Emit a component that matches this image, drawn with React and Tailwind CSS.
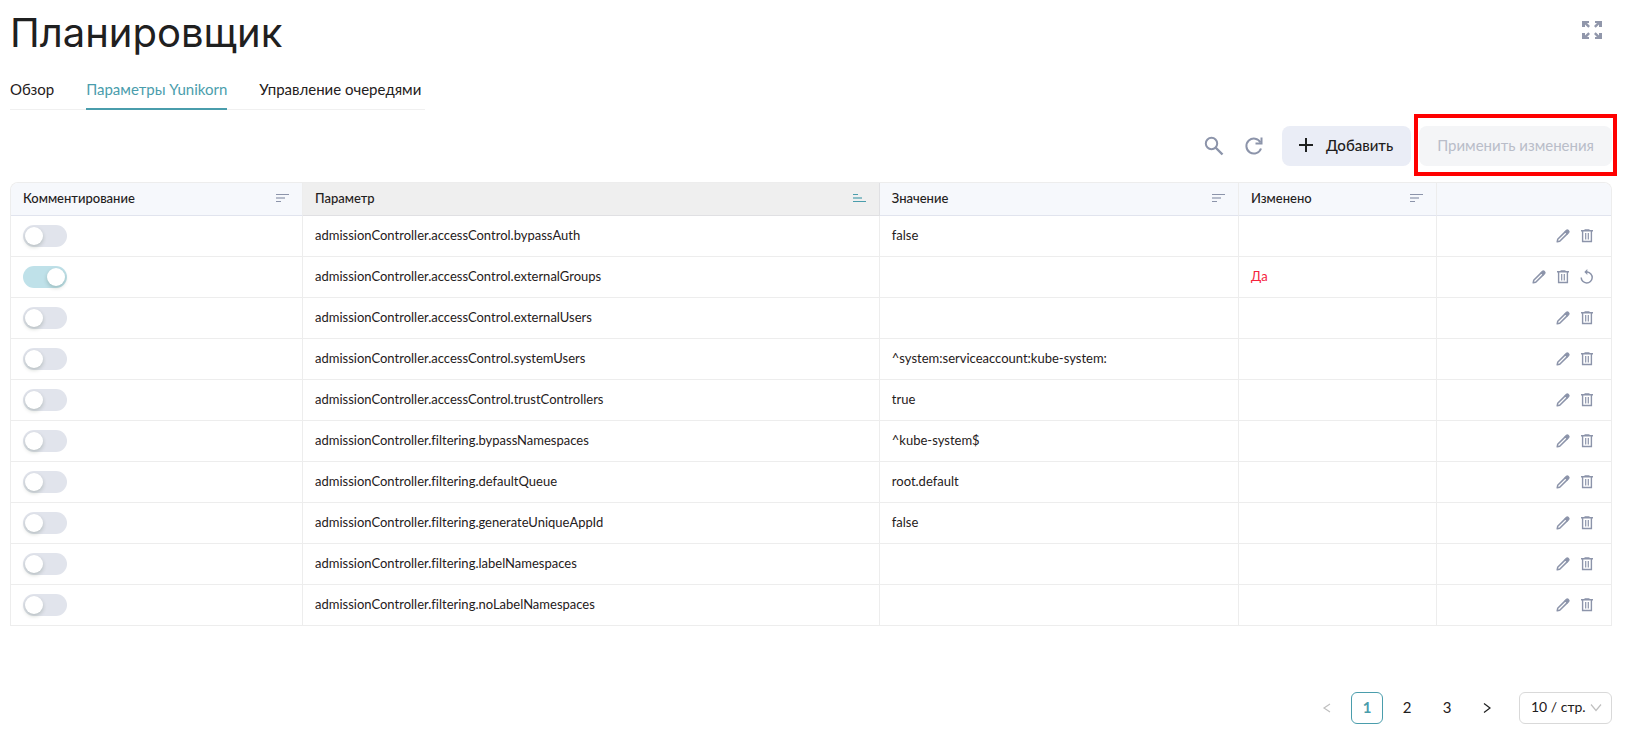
import { useState } from 'react';
import { MdAdd } from 'react-icons/md';

const initialRows = [
  { name: 'admissionController.accessControl.bypassAuth', value: 'false' },
  { name: 'admissionController.accessControl.externalGroups', value: '', commented: true, changed: true },
  { name: 'admissionController.accessControl.externalUsers', value: '' },
  { name: 'admissionController.accessControl.systemUsers', value: '^system:serviceaccount:kube-system:' },
  { name: 'admissionController.accessControl.trustControllers', value: 'true' },
  { name: 'admissionController.filtering.bypassNamespaces', value: '^kube-system$' },
  { name: 'admissionController.filtering.defaultQueue', value: 'root.default' },
  { name: 'admissionController.filtering.generateUniqueAppId', value: 'false' },
  { name: 'admissionController.filtering.labelNamespaces', value: '' },
  { name: 'admissionController.filtering.noLabelNamespaces', value: '' },
];

const tabs = ['Обзор', 'Параметры Yunikorn', 'Управление очередями'];

const columns = [
  { title: 'Комментирование', width: 'w-[18.25%]' },
  { title: 'Параметр', width: 'w-[36.05%]', sorted: true },
  { title: 'Значение', width: 'w-[22.45%]' },
  { title: 'Изменено', width: 'w-[12.4%]' },
];

const ExpandIcon = () => (
  <svg viewBox="0 0 20 20" className="size-5" fill="currentColor">
    <path d="M0 1h7v2H5l3 3-1.700 1.700L3 4.500V7H0z" />
    <path d="M20 1v6h-3V4.500l-3.300 3.200L12 6l3-3h-2V1z" />
    <path d="M0 19v-6h3v2.500l3.300-3.200L8 14l-3 3h2v2z" />
    <path d="M20 19h-7v-2h2l-3-3 1.700-1.700 3.300 3.200V13h3z" />
  </svg>
);

const SearchIcon = () => (
  <svg viewBox="0 0 20 20" className="size-5" fill="none" stroke="currentColor" strokeWidth="2">
    <circle cx="7.500" cy="7.500" r="5.700" />
    <path d="M11.500 11.500l7 7" strokeWidth="2.400" />
  </svg>
);

const RefreshIcon = () => (
  <svg viewBox="0 0 20 20" className="size-5" fill="none" stroke="currentColor" strokeWidth="2">
    <path d="M17 12.500A7.500 7.500 0 1 1 16.500 6.500" />
    <path d="M17.500 1.500v6h-6" />
  </svg>
);

const PencilIcon = () => (
  <svg viewBox="0 0 16 16" className="size-4" fill="none" stroke="currentColor" strokeWidth="1.500" strokeLinejoin="round">
    <path d="M2.200 13.800l.5-2.500 7.700-7.700 2 2-7.700 7.700z" />
    <path d="M10.400 3.600l1.200-1.200a1 1 0 0 1 1.400 0l.6.6a1 1 0 0 1 0 1.400l-1.200 1.200z" fill="currentColor" />
  </svg>
);

const TrashIcon = () => (
  <svg viewBox="0 0 16 16" className="size-4" fill="none" stroke="currentColor" strokeWidth="1.400">
    <path d="M2 2.700h12M5.500 2h5M3.600 3v10.500h8.800V3" />
    <path d="M6.700 5v6.500M9.300 5v6.500" strokeWidth="1.200" />
  </svg>
);

const RevertIcon = () => (
  <svg viewBox="0 0 16 16" className="size-4" fill="none" stroke="currentColor" strokeWidth="1.500">
    <path d="M6.500 3h1.700a5.500 5.500 0 1 1-6 5.500" />
    <path d="M8.300 0L5.300 3l3 3z" fill="currentColor" stroke="none" />
  </svg>
);

const SortIcon = ({ sorted }) => (
  <svg viewBox="0 0 14 10" className={sorted ? 'w-3.5 text-[#4a9dac]' : 'w-3.5 text-[#8c94aa]'} fill="currentColor">
    <rect x="0" y="1" width={sorted ? 5 : 13} height="1" />
    <rect x="0" y="4" width="9" height="2" opacity="0.6" />
    <rect x="0" y="8" width={sorted ? 13 : 5} height="1" />
  </svg>
);

const Chevron = ({ d }) => (
  <svg viewBox="0 0 12 12" className="size-3" fill="none" stroke="currentColor" strokeWidth="1.200">
    <path d={d} />
  </svg>
);

const Toggle = ({ checked, onChange, label }) => (
  <label className="relative block h-[22px] w-11">
    <input type="checkbox" checked={checked} onChange={onChange} aria-label={label} className="peer sr-only" />
    <span className="block h-full rounded-full bg-[#e1e4ec] peer-checked:bg-[#bfe1e9]" />
    <span className="absolute left-0.5 top-0.5 size-[18px] rounded-full bg-white shadow-[0_2px_4px_rgba(0,35,11,0.2)] peer-checked:left-6" />
  </label>
);

const App = () => {
  const [rows, setRows] = useState(initialRows);
  const [activeTab, setActiveTab] = useState(1);
  const [page, setPage] = useState(1);

  const toggleRow = (index) => {
    setRows(rows.map((row, i) => (i === index ? { ...row, commented: !row.commented } : row)));
  };

  return (
    <div className="bg-white pr-[13px] pb-2 pl-2.5 font-['Lato','Open_Sans',sans-serif] text-[#1f2020] [font-variant-ligatures:none]">
      {/* Header */}
      <header className="flex items-start justify-between pr-2.5">
        <h1 className="pt-[5px] font-['Inter',sans-serif] text-[40px] leading-[56px]">Планировщик</h1>
        <button aria-label="На весь экран" className="mt-5 text-[#9197ab]">
          <ExpandIcon />
        </button>
      </header>

      {/* Tabs */}
      <nav className="mt-[11px] inline-flex gap-8 border-b border-[#f0f0f0] pr-1 text-[15px] leading-5">
        {tabs.map((tab, index) => (
          <button
            key={tab}
            onClick={() => setActiveTab(index)}
            className={
              index === activeTab
                ? '-mb-px border-b-2 border-[#4a9dac] pt-[7px] pb-[9px] text-[#4a9dac]'
                : '-mb-px border-b-2 border-transparent pt-[7px] pb-[9px]'
            }
          >
            {tab}
          </button>
        ))}
      </nav>

      {/* Toolbar */}
      <div className="mt-4 flex items-center justify-end">
        <button aria-label="Поиск" className="flex size-10 items-center justify-center text-[#8c94aa]">
          <SearchIcon />
        </button>
        <button aria-label="Обновить" className="mr-2 flex size-10 items-center justify-center text-[#8c94aa]">
          <RefreshIcon />
        </button>
        <button className="flex h-10 items-center gap-2 rounded-lg bg-[#eaedf6] pr-[18px] pb-0.5 pl-3 text-[15px] font-medium">
          <MdAdd className="size-6" />
          Добавить
        </button>
        <div className="relative ml-2">
          <button disabled className="h-10 rounded-lg bg-[#f4f5f7] px-[18px] pb-0.5 text-[15px] text-[#b9bdc9]">
            Применить изменения
          </button>
          <span className="pointer-events-none absolute -inset-x-[5px] -top-3 -bottom-2.5 border-4 border-[#ff0000]" />
        </div>
      </div>

      {/* Parameters table */}
      <div className="mt-4 overflow-hidden rounded-t-lg border border-b-0 border-[#ededed]">
        <table className="w-full table-fixed border-separate border-spacing-0 text-[13px] leading-5">
          <thead>
            <tr>
              {columns.map((column) => (
                <th
                  key={column.title}
                  className={`${column.width} h-[33px] border-r border-b px-3 pb-0.5 text-left font-medium ${
                    column.sorted ? 'border-[#e0e0e3] bg-[#efefef]' : 'border-r-[#ededed] border-b-[#e1e4ee] bg-[#f6f8fc]'
                  }`}
                >
                  <div className="flex items-center justify-between">
                    {column.title}
                    <button aria-label={`Сортировать: ${column.title}`}>
                      <SortIcon sorted={column.sorted} />
                    </button>
                  </div>
                </th>
              ))}
              <th className="border-b border-[#e1e4ee] bg-[#f6f8fc]" />
            </tr>
          </thead>
          <tbody>
            {rows.map((row, index) => (
              <tr key={row.name}>
                <td className="h-[41px] border-r border-b border-[#ededed] px-3">
                  <Toggle checked={!!row.commented} onChange={() => toggleRow(index)} label={row.name} />
                </td>
                <td className="border-r border-b border-[#ededed] px-3 pb-0.5">{row.name}</td>
                <td className="border-r border-b border-[#ededed] px-3 pb-0.5">{row.value}</td>
                <td className="border-r border-b border-[#ededed] px-3 pb-0.5 text-[#f5223d]">{row.changed ? 'Да' : ''}</td>
                <td className="border-b border-[#ededed] px-4">
                  <div className="flex justify-end gap-2 text-[#8c94aa]">
                    <button aria-label="Изменить"><PencilIcon /></button>
                    <button aria-label="Удалить"><TrashIcon /></button>
                    {row.changed && <button aria-label="Вернуть"><RevertIcon /></button>}
                  </div>
                </td>
              </tr>
            ))}
          </tbody>
        </table>
      </div>

      {/* Pagination */}
      <div className="mt-[66px] flex items-center justify-end gap-2 text-[15px]">
        <button disabled aria-label="Назад" className="flex size-8 items-center justify-center text-[#bfbfbf]">
          <Chevron d="M9 2L3 6l6 4" />
        </button>
        {[1, 2, 3].map((number) => (
          <button
            key={number}
            onClick={() => setPage(number)}
            className={
              number === page
                ? 'size-8 rounded-md border border-[#4a9dac] pb-0.5 font-bold text-[#4a9dac]'
                : 'size-8 rounded-md pb-0.5'
            }
          >
            {number}
          </button>
        ))}
        <button aria-label="Вперёд" className="flex size-8 items-center justify-center">
          <Chevron d="M3 1.500L9 6l-6 4.500" />
        </button>
        <div className="relative ml-2">
          <select aria-label="Строк на странице" className="h-8 w-[93px] appearance-none rounded-md border border-[#d9d9d9] pb-0.5 pl-[11px] text-sm">
            <option>10 / стр.</option>
            <option>20 / стр.</option>
            <option>50 / стр.</option>
          </select>
          <span className="pointer-events-none absolute top-2.5 right-2.5 text-[#bfbfbf]">
            <Chevron d="M1 2.500l5 6 5-6" />
          </span>
        </div>
      </div>
    </div>
  );
};

export default App;
